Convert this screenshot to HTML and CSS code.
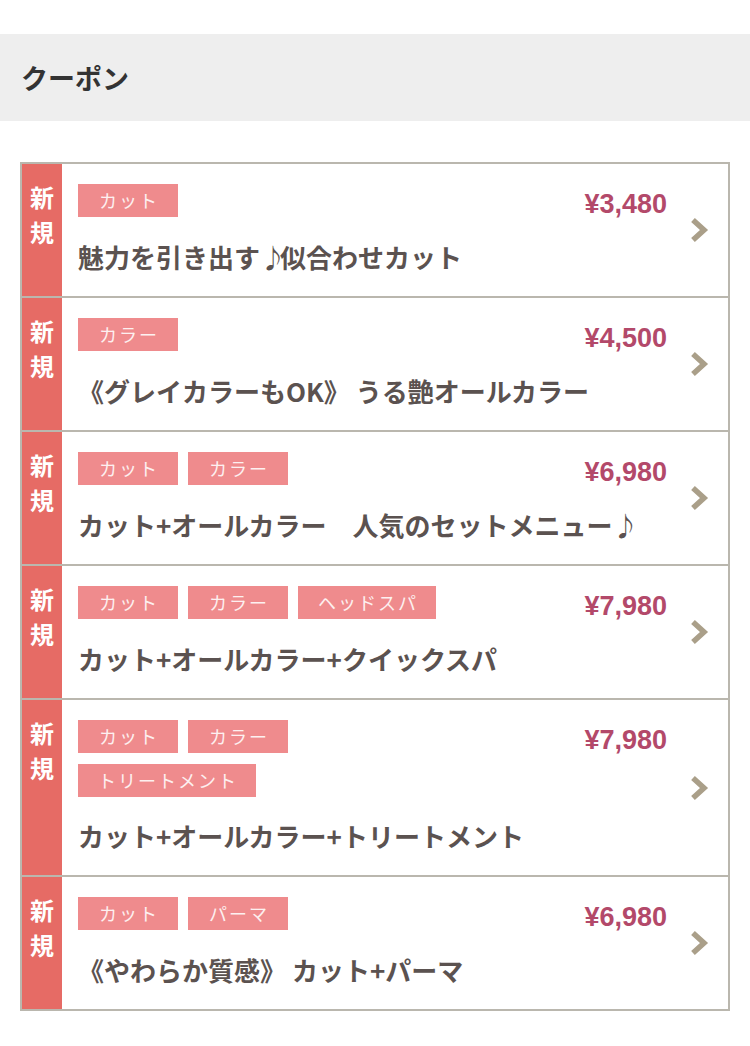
FILE: index.html
```html
<!DOCTYPE html>
<html lang="ja">
<head>
<meta charset="utf-8">
<title>クーポン</title>
<link rel="stylesheet" href="styles.css">
</head>
<body>
<div class="header"><h2 class="header-title">クーポン</h2></div>

<ul class="coupons">
  <li class="coupon">
    <div class="badge"><span>新</span><span>規</span></div>
    <div class="main">
      <div class="top">
        <div class="tags"><span class="tag">カット</span></div>
        <div class="price">¥3,480</div>
      </div>
      <p class="name">魅力を引き出す<span class="note">♪</span>似合わせカット</p>
    </div>
    <div class="arrow"><svg width="20" height="28" viewBox="0 0 20 28"><path d="M4 4 L15 14 L4 24" fill="none" stroke="#aa9f89" stroke-width="5.5"/></svg></div>
  </li>
  <li class="coupon">
    <div class="badge"><span>新</span><span>規</span></div>
    <div class="main">
      <div class="top">
        <div class="tags"><span class="tag">カラー</span></div>
        <div class="price">¥4,500</div>
      </div>
      <p class="name">《グレイカラーもOK》 うる艶オールカラー</p>
    </div>
    <div class="arrow"><svg width="20" height="28" viewBox="0 0 20 28"><path d="M4 4 L15 14 L4 24" fill="none" stroke="#aa9f89" stroke-width="5.5"/></svg></div>
  </li>
  <li class="coupon">
    <div class="badge"><span>新</span><span>規</span></div>
    <div class="main">
      <div class="top">
        <div class="tags"><span class="tag">カット</span><span class="tag">カラー</span></div>
        <div class="price">¥6,980</div>
      </div>
      <p class="name">カット+オールカラー　人気のセットメニュー<span class="note">♪</span></p>
    </div>
    <div class="arrow"><svg width="20" height="28" viewBox="0 0 20 28"><path d="M4 4 L15 14 L4 24" fill="none" stroke="#aa9f89" stroke-width="5.5"/></svg></div>
  </li>
  <li class="coupon">
    <div class="badge"><span>新</span><span>規</span></div>
    <div class="main">
      <div class="top">
        <div class="tags"><span class="tag">カット</span><span class="tag">カラー</span><span class="tag">ヘッドスパ</span></div>
        <div class="price">¥7,980</div>
      </div>
      <p class="name">カット+オールカラー+クイックスパ</p>
    </div>
    <div class="arrow"><svg width="20" height="28" viewBox="0 0 20 28"><path d="M4 4 L15 14 L4 24" fill="none" stroke="#aa9f89" stroke-width="5.5"/></svg></div>
  </li>
  <li class="coupon">
    <div class="badge"><span>新</span><span>規</span></div>
    <div class="main">
      <div class="top">
        <div class="tags"><span class="tag">カット</span><span class="tag">カラー</span><span class="tag">トリートメント</span></div>
        <div class="price">¥7,980</div>
      </div>
      <p class="name">カット+オールカラー+トリートメント</p>
    </div>
    <div class="arrow"><svg width="20" height="28" viewBox="0 0 20 28"><path d="M4 4 L15 14 L4 24" fill="none" stroke="#aa9f89" stroke-width="5.5"/></svg></div>
  </li>
  <li class="coupon">
    <div class="badge"><span>新</span><span>規</span></div>
    <div class="main">
      <div class="top">
        <div class="tags"><span class="tag">カット</span><span class="tag">パーマ</span></div>
        <div class="price">¥6,980</div>
      </div>
      <p class="name">《やわらか質感》 カット+パーマ</p>
    </div>
    <div class="arrow"><svg width="20" height="28" viewBox="0 0 20 28"><path d="M4 4 L15 14 L4 24" fill="none" stroke="#aa9f89" stroke-width="5.5"/></svg></div>
  </li>
</ul>
</body>
</html>
```

FILE: styles.css
```css
* { box-sizing: border-box; }

body {
  margin: 0;
  background: #ffffff;
  font-family: "Noto Sans CJK JP", "Noto Sans", sans-serif;
}

.header {
  margin-top: 34px;
  height: 87px;
  background: #eeeeee;
  display: flex;
  align-items: center;
  padding-left: 21px;
}

.header-title {
  margin: 0;
  font-size: 27px;
  font-weight: 700;
  color: #333333;
  line-height: 1;
}

.coupons {
  list-style: none;
  margin: 41px 20px 0;
  padding: 0;
  border: 2px solid #bab7ae;
}

.coupon {
  display: flex;
  border-bottom: 2px solid #bab7ae;
}

.coupon:last-child { border-bottom: none; }

.badge {
  width: 40px;
  flex: 0 0 40px;
  background: #e66b65;
  color: #ffffff;
  font-size: 24px;
  font-weight: 700;
  line-height: 35px;
  padding-top: 15px;
  display: flex;
  flex-direction: column;
  align-items: center;
}

.main {
  flex: 1;
  padding: 20px 0 21px 16px;
}

.top {
  display: flex;
  justify-content: space-between;
  align-items: flex-start;
}

.tags {
  flex: 0 1 380px;
  display: flex;
  flex-wrap: wrap;
  gap: 11px 10px;
}

.tag {
  display: block;
  height: 33px;
  line-height: 33px;
  padding: 0 18px 0 20px;
  background: #ef8b8d;
  color: #fdf0f0;
  font-size: 18px;
  letter-spacing: 2px;
  min-width: 100px;
  text-align: center;
}

.price {
  margin-top: 7px;
  font-family: "Liberation Sans", Arial, sans-serif;
  font-weight: 700;
  font-size: 27px;
  line-height: 27px;
  color: #b3496a;
}

.name {
  margin: 21px 0 0;
  font-size: 26px;
  font-weight: 700;
  line-height: 36px;
  color: #5b5250;
}

.note {
  letter-spacing: -6px;
}

.arrow {
  flex: 0 0 61px;
  display: flex;
  align-items: center;
  justify-content: center;
  padding-left: 2px;
}

.arrow svg { display: block; }
```
